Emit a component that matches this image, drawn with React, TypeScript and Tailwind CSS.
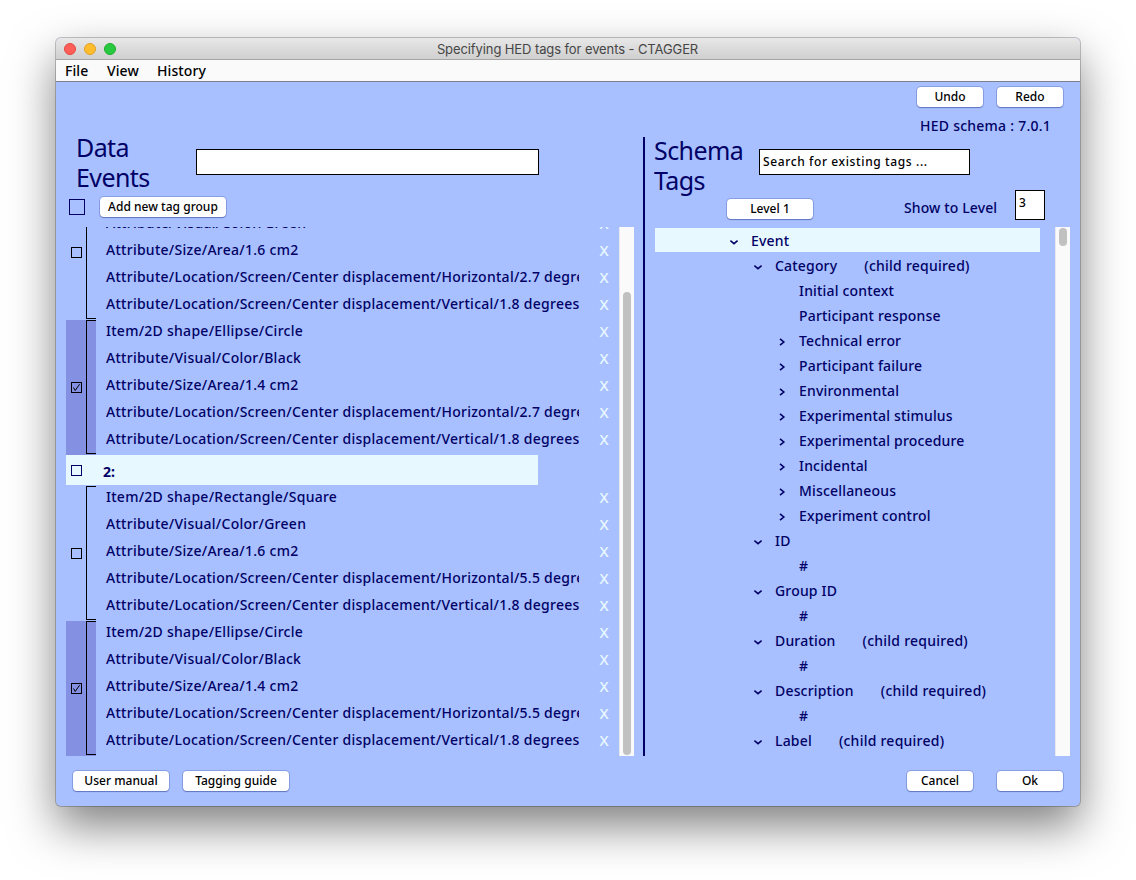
import type { ReactNode } from "react";

type Group = { checked: boolean; tags: string[] };
type Node = { level: number; label: string; state?: "open" | "closed"; required?: boolean };

const location = "Attribute/Location/Screen/Center displacement";

const square = (area: string, x: string): string[] => [
  "Item/2D shape/Rectangle/Square",
  "Attribute/Visual/Color/Green",
  `Attribute/Size/Area/${area} cm2`,
  `${location}/Horizontal/${x} degrees`,
  `${location}/Vertical/1.8 degrees`,
];

const circle = (area: string, x: string): string[] => [
  "Item/2D shape/Ellipse/Circle",
  "Attribute/Visual/Color/Black",
  `Attribute/Size/Area/${area} cm2`,
  `${location}/Horizontal/${x} degrees`,
  `${location}/Vertical/1.8 degrees`,
];

const firstEvent: Group[] = [
  { checked: false, tags: square("1.6", "2.7").slice(1) },
  { checked: true, tags: circle("1.4", "2.7") },
];

const secondEvent: Group[] = [
  { checked: false, tags: square("1.6", "5.5") },
  { checked: true, tags: circle("1.4", "5.5") },
];

const nodes: Node[] = [
  { level: 0, label: "Event", state: "open" },
  { level: 1, label: "Category", state: "open", required: true },
  { level: 2, label: "Initial context" },
  { level: 2, label: "Participant response" },
  { level: 2, label: "Technical error", state: "closed" },
  { level: 2, label: "Participant failure", state: "closed" },
  { level: 2, label: "Environmental", state: "closed" },
  { level: 2, label: "Experimental stimulus", state: "closed" },
  { level: 2, label: "Experimental procedure", state: "closed" },
  { level: 2, label: "Incidental", state: "closed" },
  { level: 2, label: "Miscellaneous", state: "closed" },
  { level: 2, label: "Experiment control", state: "closed" },
  { level: 1, label: "ID", state: "open" },
  { level: 2, label: "#" },
  { level: 1, label: "Group ID", state: "open" },
  { level: 2, label: "#" },
  { level: 1, label: "Duration", state: "open", required: true },
  { level: 2, label: "#" },
  { level: 1, label: "Description", state: "open", required: true },
  { level: 2, label: "#" },
  { level: 1, label: "Label", state: "open", required: true },
];

const indents = ["pl-[74px]", "pl-[98px]", "pl-[122px]"];

function Button({ className, children }: { className: string; children: ReactNode }) {
  return (
    <button
      className={`flex h-5 shrink-0 items-center justify-center rounded-[4px] bg-white text-[12px] font-medium tracking-[0.02px] text-black shadow-[0_0_0_1px_rgba(90,110,190,0.4),0_1px_1px_rgba(40,60,140,0.5)] ${className}`}
    >
      {children}
    </button>
  );
}

function Check({ checked, className }: { checked: boolean; className: string }) {
  return (
    <span className={`block size-[11px] shrink-0 border ${className}`}>
      {checked && (
        <svg width="9" height="9" viewBox="0 0 9 9" fill="none" stroke="#000" strokeWidth="1">
          <path d="M1.5 4.5 L3.2 7.5 L7.6 1.2" />
        </svg>
      )}
    </span>
  );
}

function Chevron({ state }: { state?: "open" | "closed" }) {
  return (
    <svg width="10" height="10" viewBox="0 0 10 10" fill="none" stroke="#000066" strokeWidth="1.6" className="mt-1 shrink-0">
      {state === "open" && <path d="M1.4 3.7 L5 6.7 L8.6 3.7" />}
      {state === "closed" && <path d="M3 1.9 L6.8 5 L3 8.1" />}
    </svg>
  );
}

function TagGroup({ group }: { group: Group }) {
  return (
    <div className="flex h-[135px] shrink-0">
      <div className={`flex w-[30px] shrink-0 ${group.checked ? "bg-[#8490e2]" : ""}`}>
        <Check checked={group.checked} className="mt-[62px] ml-[5px] border-black" />
        <span className="ml-1 h-[134px] w-[10px] border-y border-l border-black" />
      </div>
      <div className="flex w-[483px] flex-col justify-end overflow-hidden pl-[10px]">
        {group.tags.map((tag) => (
          <div key={tag} className="h-[27px] shrink-0 text-[14px] leading-[22px] tracking-[0.265px] whitespace-nowrap">
            {tag}
          </div>
        ))}
      </div>
      <div className="ml-[19px] flex w-3 flex-col justify-end">
        {group.tags.map((tag) => (
          <div key={tag} className="h-[27px] shrink-0 text-center text-[15px] leading-[22px] text-[#e8f8ff]">
            X
          </div>
        ))}
      </div>
    </div>
  );
}

export default function App() {
  return (
    <div className="h-[880px] w-[1136px] overflow-hidden bg-white px-14 pt-[38px] font-['Noto_Sans',sans-serif] font-medium text-[#000066]">
      <div className="flex h-[768px] w-[1024px] flex-col overflow-hidden rounded-[5px] bg-[#a8c0ff] shadow-[0_0_0_1px_rgba(0,0,0,0.22),0_20px_46px_rgba(0,0,0,0.5)]">
        <div className="flex h-[22px] shrink-0 items-center border-b border-[#a6a6a6] bg-linear-to-b from-[#e8e8e8] to-[#cfcfcf] pl-2">
          <div className="flex w-[52px] gap-2">
            <span className="size-3 rounded-full border border-[#e2463f] bg-[#ff5f57]" />
            <span className="size-3 rounded-full border border-[#dfa023] bg-[#ffbd2e]" />
            <span className="size-3 rounded-full border border-[#1dad2b] bg-[#28c940]" />
          </div>
          <div className="mr-[61px] flex-1 text-center font-['Inter',sans-serif] text-[13px] leading-5 font-normal tracking-[-0.1px] text-[#464646]">
            Specifying HED tags for events - CTAGGER
          </div>
        </div>
        <div className="flex h-[22px] shrink-0 border-b border-[#7c7f8c] bg-[#fafafa] pl-[9px] text-[14px] leading-[21px] tracking-[0.1px] text-black">
          <span className="w-[42px]">File</span>
          <span className="w-[50px]">View</span>
          <span>History</span>
        </div>

        <div className="flex h-[55px] shrink-0 flex-col items-end pt-[5px] pr-[17px]">
          <div className="flex gap-[14px]">
            <Button className="w-[66px]">Undo</Button>
            <Button className="w-[66px]">Redo</Button>
          </div>
          <div className="mt-[9px] mr-3 text-[14px] leading-5 tracking-[0.24px]">HED schema : 7.0.1</div>
        </div>

        <div className="flex h-[619px] shrink-0">
          <section className="flex w-[587px] flex-col pl-[10px]">
            <div className="flex h-[58px] shrink-0">
              <h1 className="-mt-[5px] w-[130px] pl-[10px] text-[25px] leading-[30px] font-normal tracking-[-0.6px]">
                Data
                <br />
                Events
              </h1>
              <input className="mt-3 h-[26px] w-[343px] border border-black bg-white px-1 text-[12px] outline-none" />
            </div>
            <div className="flex h-8 shrink-0 pl-[3px]">
              <span className="mt-1 size-4 border border-[#000066]" />
              <span className="w-[15px]" />
              <span className="mt-[2px]">
                <Button className="w-[126px]">Add new tag group</Button>
              </span>
            </div>
            <div className="flex h-[529px]">
              <div className="flex w-[553px] flex-col justify-end overflow-hidden">
                {firstEvent.map((group, i) => (
                  <TagGroup key={i} group={group} />
                ))}
                <div className="mb-px flex h-[30px] w-[472px] shrink-0 bg-[#e8f8ff]">
                  <Check checked={false} className="mt-[10px] ml-[5px] border-[#000066]" />
                  <span className="ml-[21px] text-[14px] leading-[33px] font-bold">2:</span>
                </div>
                {secondEvent.map((group, i) => (
                  <TagGroup key={i} group={group} />
                ))}
              </div>
              <div className="w-[15px] border-l border-[#e8e8ee] bg-[#fafafa] pt-[65px] pl-[3px]">
                <div className="h-[463px] w-2 rounded-full bg-[#c1c1c1]" />
              </div>
            </div>
          </section>

          <div className="w-[2px] bg-[#000066]" />

          <section className="flex w-[425px] flex-col pl-[10px]">
            <div className="flex h-[53px] shrink-0">
              <h1 className="-mt-[2px] -ml-px w-[105px] text-[25px] leading-[30px] font-normal tracking-[-0.6px]">
                Schema
                <br />
                Tags
              </h1>
              <input
                className="mt-3 h-[26px] w-[211px] border border-black bg-white px-[3px] pb-[2px] text-[12px] font-medium tracking-[0.62px] text-black outline-none placeholder:text-black placeholder:opacity-100"
                placeholder="Search for existing tags ..."
              />
            </div>
            <div className="flex h-[37px] shrink-0 pl-[72px]">
              <span className="mt-[9px]">
                <Button className="w-[86px]">Level 1</Button>
              </span>
              <span className="mt-2 ml-[91px] w-[111px] text-[14px] leading-5 tracking-[0.12px]">Show to Level</span>
              <span className="h-[30px] w-[30px] border border-black bg-white pl-[3px] text-[12px] leading-[23px] text-black">
                3
              </span>
            </div>
            <div className="flex h-[529px]">
              <div className="w-[385px] overflow-hidden pt-px">
                {nodes.map((node, i) => (
                  <div
                    key={i}
                    className={`mb-px flex h-6 items-center text-[14px] tracking-[0.18px] ${i === 0 ? "bg-[#e8f8ff]" : ""} ${indents[node.level]}`}
                  >
                    <Chevron state={node.state} />
                    <span className="mt-[2px] ml-3 leading-6 whitespace-nowrap">{node.label}</span>
                    {node.required && (
                      <span className="mt-[2px] ml-[27px] leading-6 tracking-[0.24px] whitespace-nowrap">(child required)</span>
                    )}
                  </div>
                ))}
              </div>
              <div className="ml-[15px] w-[15px] border-l border-[#e8e8ee] bg-[#fafafa] pt-px pl-[3px]">
                <div className="h-[18px] w-2 rounded-full bg-[#c1c1c1]" />
              </div>
            </div>
          </section>
        </div>

        <footer className="flex pt-[15px] pr-[17px] pl-[17px]">
          <Button className="w-[96px]">User manual</Button>
          <Button className="ml-[14px] w-[106px]">Tagging guide</Button>
          <span className="flex-1" />
          <Button className="mr-6 w-[66px]">Cancel</Button>
          <Button className="w-[66px]">Ok</Button>
        </footer>
      </div>
    </div>
  );
}
